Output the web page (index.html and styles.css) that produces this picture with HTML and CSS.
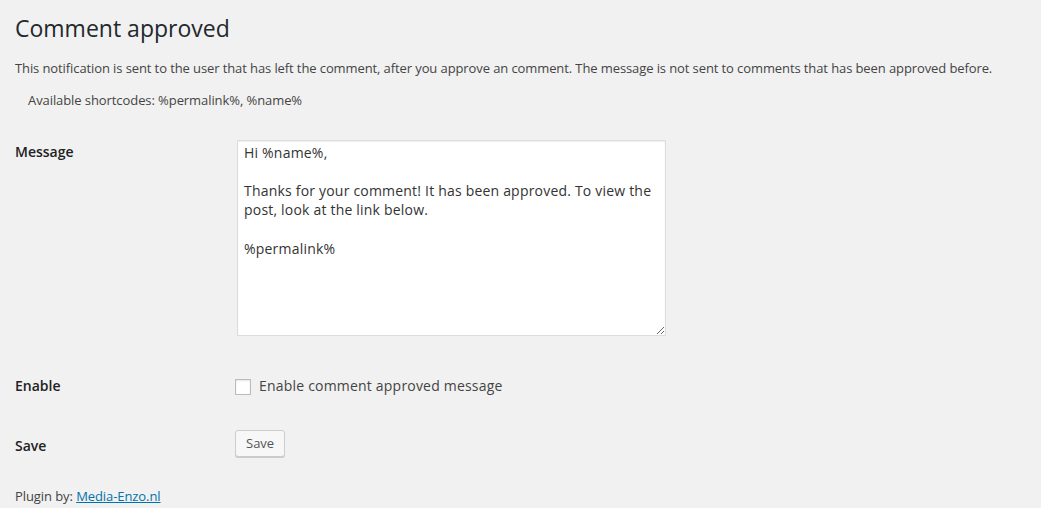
FILE: index.html
```html
<!DOCTYPE html>
<html lang="en">
<head>
<meta charset="utf-8">
<title>Comment approved</title>
<link rel="stylesheet" href="styles.css">
</head>
<body>
<div class="wrap">
  <h2 class="title">Comment approved</h2>
  <p class="desc">This notification is sent to the user that has left the comment, after you approve an comment. The message is not sent to comments that has been approved before.</p>
  <p class="shortcodes">Available shortcodes: %permalink%, %name%</p>

  <form class="form">
    <div class="row row-message">
      <div class="label">Message</div>
      <div class="field">
        <textarea class="textarea">Hi %name%,

Thanks for your comment! It has been approved. To view the post, look at the link below.

%permalink%</textarea>
      </div>
    </div>
    <div class="row row-enable">
      <div class="label">Enable</div>
      <div class="field">
        <label class="check-label"><input type="checkbox" class="checkbox"> Enable comment approved message</label>
      </div>
    </div>
    <div class="row row-save">
      <div class="label">Save</div>
      <div class="field">
        <button type="button" class="button">Save</button>
      </div>
    </div>
  </form>

  <p class="footer">Plugin by: <a href="#" class="link">Media-Enzo.nl</a></p>
</div>
</body>
</html>
```

FILE: styles.css
```css
html, body {
  margin: 0;
  padding: 0;
  background: #f1f1f1;
}

body {
  font-family: "Open Sans", "DejaVu Sans", sans-serif;
  font-size: 13px;
  color: #444;
}

.wrap {
  padding: 13px 0 0 15px;
}

.title {
  margin: 0;
  font-size: 23px;
  font-weight: 400;
  line-height: 30px;
  color: #23282d;
}

.desc {
  margin: 16px 0 0;
  font-size: 13px;
  line-height: 19.5px;
  letter-spacing: -0.1px;
}

.shortcodes {
  margin: 12.5px 0 0;
  padding-left: 13px;
  font-size: 13px;
  line-height: 19.5px;
  letter-spacing: -0.08px;
}

.form {
  margin-top: 29px;
}

.row {
  display: grid;
  grid-template-columns: 220px 1fr;
  align-items: start;
}

.label {
  font-size: 14px;
  font-weight: 600;
  line-height: 19.6px;
  color: #222;
}

.row-message .label {
  padding-top: 2.5px;
}

.textarea {
  display: block;
  box-sizing: border-box;
  width: 429px;
  height: 196px;
  margin: 0 0 0 2px;
  padding: 2px 6px;
  border: 1px solid #ddd;
  background: #fff;
  box-shadow: inset 0 1px 2px rgba(0, 0, 0, 0.07);
  font-family: "Open Sans", "DejaVu Sans", sans-serif;
  font-size: 14px;
  line-height: 19.2px;
  letter-spacing: 0.2px;
  color: #333;
  outline: none;
}

.row-enable {
  margin-top: 40px;
}

.check-label {
  display: flex;
  align-items: flex-start;
  font-size: 14px;
  line-height: 19.6px;
  letter-spacing: 0.2px;
  color: #444;
}

.checkbox {
  appearance: none;
  -webkit-appearance: none;
  box-sizing: border-box;
  width: 16px;
  height: 16px;
  margin: 3px 8px 0 0;
  border: 1px solid #bbb;
  background: #fff;
  box-shadow: inset 0 1px 2px rgba(0, 0, 0, 0.1);
  border-radius: 0;
}

.row-save {
  margin-top: 35px;
}

.row-save .label {
  padding-top: 6px;
}

.button {
  box-sizing: border-box;
  height: 27px;
  padding: 0 10px 1px;
  border: 1px solid #ccc;
  border-radius: 3px;
  background: #f7f7f7;
  box-shadow: 0 1px 0 #ccc;
  font-family: "Open Sans", "DejaVu Sans", sans-serif;
  font-size: 13px;
  line-height: 24px;
  color: #555;
  cursor: pointer;
}

.footer {
  margin: 30px 0 0;
  font-size: 13px;
  line-height: 19.5px;
  letter-spacing: -0.08px;
  color: #444;
}

.link {
  color: #0073aa;
  text-decoration: underline;
}
```
